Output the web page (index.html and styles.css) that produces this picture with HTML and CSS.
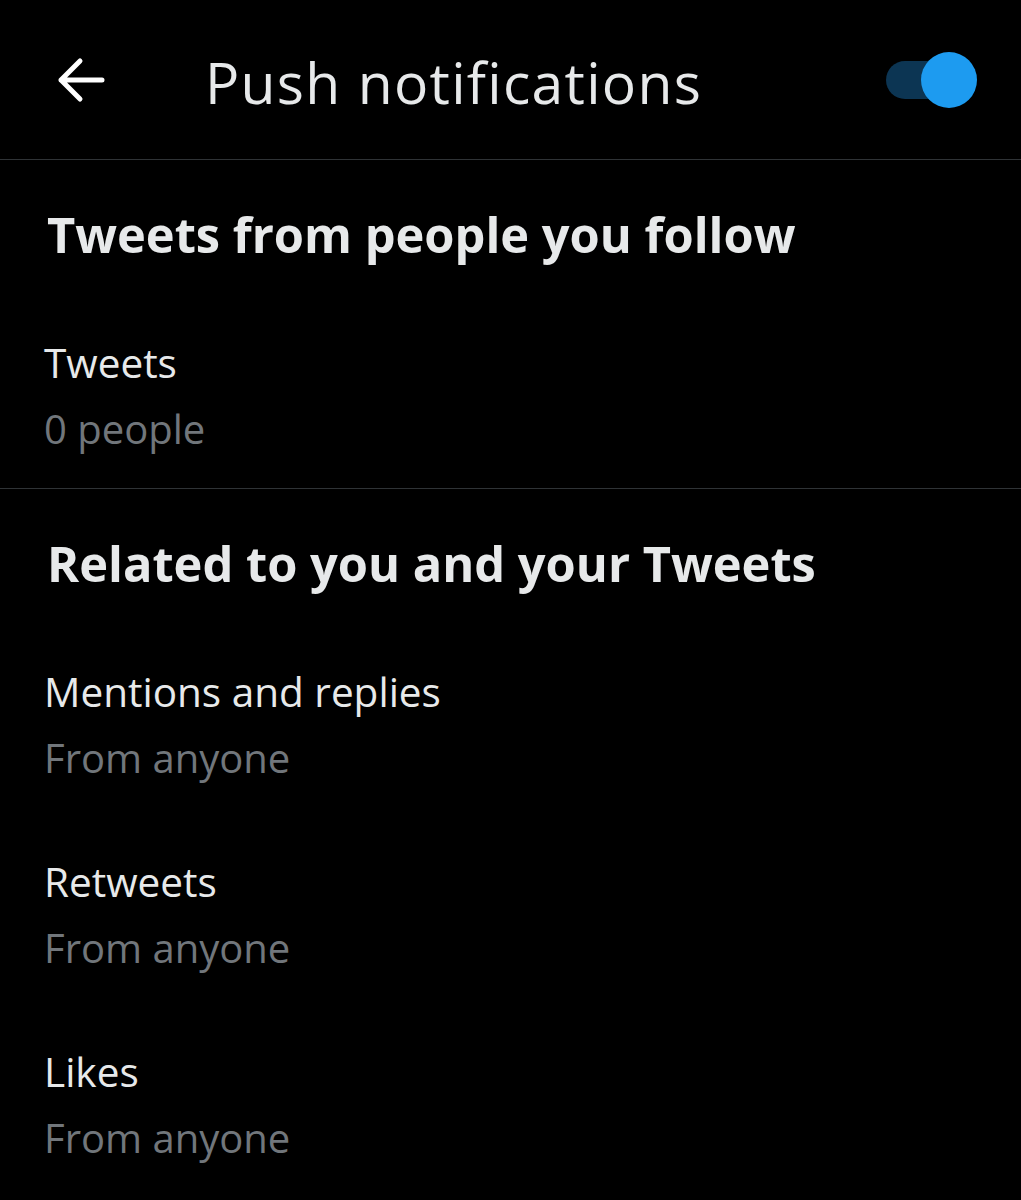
FILE: index.html
```html
<!DOCTYPE html>
<html lang="en">

<head>
    <meta charset="UTF-8">
    <meta name="viewport" content="width=device-width, initial-scale=1.0">
    <title>Push notifications</title>
    <link rel="stylesheet" href="styles.css">
</head>

<body>

    <!-- Top bar -->
    <header class="topbar">
        <span class="back">
            <svg width="48" height="46" viewBox="0 0 48 46" fill="none" stroke="#fff" stroke-width="5" stroke-linecap="round" stroke-linejoin="round">
                <path d="M45 23H4M23 4L4 23l19 19" />
            </svg>
        </span>
        <h1>Push notifications</h1>
        <span class="toggle on"><span class="thumb"></span></span>
    </header>

    <!-- People you follow -->
    <section class="group">
        <h2>Tweets from people you follow</h2>
        <div class="item">
            <div class="item-title">Tweets</div>
            <div class="item-sub">0 people</div>
        </div>
    </section>

    <!-- About you -->
    <section class="group">
        <h2>Related to you and your Tweets</h2>
        <div class="item">
            <div class="item-title">Mentions and replies</div>
            <div class="item-sub">From anyone</div>
        </div>
        <div class="item">
            <div class="item-title">Retweets</div>
            <div class="item-sub">From anyone</div>
        </div>
        <div class="item">
            <div class="item-title">Likes</div>
            <div class="item-sub">From anyone</div>
        </div>
    </section>

</body>

</html>
```

FILE: styles.css
```css
* {
    margin: 0;
    padding: 0;
    box-sizing: border-box;
}

body {
    background-color: #000;
    color: #e7e9ea;
    font-family: "Open Sans", "Noto Sans", sans-serif;
    width: 1021px;
    height: 1200px;
    overflow: hidden;
}

/* Header row */
.topbar {
    height: 160px;
    display: flex;
    align-items: center;
    padding: 0 44px 0 57px;
    border-bottom: 1px solid #2f3336;
}

.back {
    display: flex;
    width: 48px;
    height: 46px;
    margin-right: 100px;
}

.topbar h1 {
    flex: 1;
    font-size: 57px;
    font-weight: 400;
    letter-spacing: 1.3px;
    color: #e7e9ea;
    line-height: 56px;
    padding-top: 5px;
}

/* Switch */
.toggle {
    position: relative;
    width: 91px;
    height: 56px;
    display: flex;
    align-items: center;
}

.toggle::before {
    content: "";
    width: 64px;
    height: 38px;
    border-radius: 19px;
    background-color: #0c3553;
}

.toggle .thumb {
    position: absolute;
    right: 0;
    top: 0;
    width: 56px;
    height: 56px;
    border-radius: 50%;
    background-color: #1d9bf0;
}

/* Groups */
.group {
    padding: 42px 44px 0;
}

.group + .group {
    border-top: 1px solid #2f3336;
}

.group h2 {
    font-size: 48.8px;
    font-weight: 700;
    line-height: 64px;
    padding-left: 3px;
    margin-bottom: 70px;
}

.item {
    height: 190px;
    display: flex;
    flex-direction: column;
    gap: 12px;
}

.group:first-of-type .item {
    height: 152px;
}

.item-title {
    font-size: 40.5px;
    line-height: 54px;
}

.item-sub {
    font-size: 40px;
    line-height: 54px;
    color: #71767b;
}
```
